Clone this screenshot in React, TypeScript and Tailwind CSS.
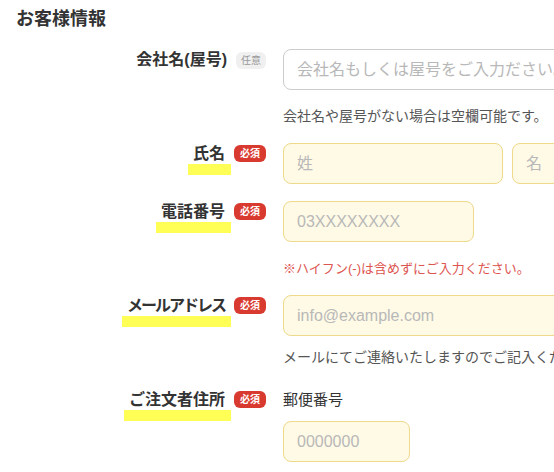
import type { ReactNode } from 'react';

const font = "font-['Liberation_Sans','Noto_Sans_CJK_JP',sans-serif]";

function Badge({ required }: { required?: boolean }) {
  return required ? (
    <span className="mt-[1px] inline-flex h-[17px] w-[32px] items-center justify-center rounded-[6px] bg-[#d93a30] text-[10px] font-bold leading-none text-white">
      必須
    </span>
  ) : (
    <span className="mt-[2px] inline-flex h-[17px] w-[30px] items-center justify-center rounded-[6px] bg-[#f0f0f0] text-[10px] leading-none text-[#999]">
      任意
    </span>
  );
}

function Label({
  text,
  required,
  marker,
  tight,
}: {
  text: string;
  required?: boolean;
  marker?: boolean;
  tight?: boolean;
}) {
  return (
    <div className="flex items-start justify-end gap-[3px] pt-[1px]">
      <div className="inline-flex flex-col">
        <span
          className={`pl-[5px] pr-[6px] text-[16px] font-bold leading-[20px] text-[#333] ${tight ? 'tracking-[-2px]' : ''}`}
        >
          {text}
        </span>
        {marker && <span className="h-[11px] bg-[#ffff55]" />}
      </div>
      <Badge required={required} />
    </div>
  );
}

function Field({ placeholder, width, plain }: { placeholder: string; width: string; plain?: boolean }) {
  return (
    <input
      placeholder={placeholder}
      className={
        plain
          ? `h-[41px] ${width} rounded-[8px] border border-[#cccccc] bg-white px-[13px] text-[16px] text-[#333] outline-none placeholder:text-[#b8b8b8]`
          : `h-[41px] ${width} rounded-[8px] border border-[#efd98a] bg-[#fffae6] px-[13px] text-[16px] text-[#333] outline-none placeholder:text-[#b8b8b8]`
      }
    />
  );
}

function Row({ label, children, className }: { label: ReactNode; children: ReactNode; className: string }) {
  return (
    <div className={`grid grid-cols-[250px_1fr] gap-x-[17px] ${className}`}>
      {label}
      <div className="flex flex-col items-start">{children}</div>
    </div>
  );
}

export default function App() {
  return (
    <div className={`h-[472px] w-full overflow-hidden bg-white ${font}`}>
      <div className="w-[800px] px-4 pt-[6px]">
        <h2 className="text-[18px] font-bold leading-[26px] text-[#333]">お客様情報</h2>

        <Row className="mt-[17px]" label={<Label text="会社名(屋号)" />}>
          <Field plain placeholder="会社名もしくは屋号をご入力ださい。" width="w-[420px]" />
          <p className="mt-4 text-[14px] leading-[20px] text-[#555]">会社名や屋号がない場合は空欄可能です。</p>
        </Row>

        <Row className="mt-[17px]" label={<Label text="氏名" required marker />}>
          <div className="flex gap-[9px]">
            <Field placeholder="姓" width="w-[220px]" />
            <Field placeholder="名" width="w-[220px]" />
          </div>
        </Row>

        <Row className="mt-[17px]" label={<Label text="電話番号" required marker />}>
          <Field placeholder="03XXXXXXXX" width="w-[191px]" />
          <p className="mt-[17px] text-[13px] leading-[20px] text-[#dd5550]">※ハイフン(-)は含めずにご入力ください。</p>
        </Row>

        <Row className="mt-4" label={<Label text="メールアドレス" required marker tight />}>
          <Field placeholder="info@example.com" width="w-[420px]" />
          <p className="mt-[11px] text-[14px] leading-[20px] text-[#555]">メールにてご連絡いたしますのでご記入ください。</p>
        </Row>

        <Row className="mt-[22px]" label={<Label text="ご注文者住所" required marker />}>
          <p className="text-[15px] leading-[22px] text-[#333]">郵便番号</p>
          <div className="mt-[10px]">
            <Field placeholder="0000000" width="w-[127px]" />
          </div>
        </Row>
      </div>
    </div>
  );
}
